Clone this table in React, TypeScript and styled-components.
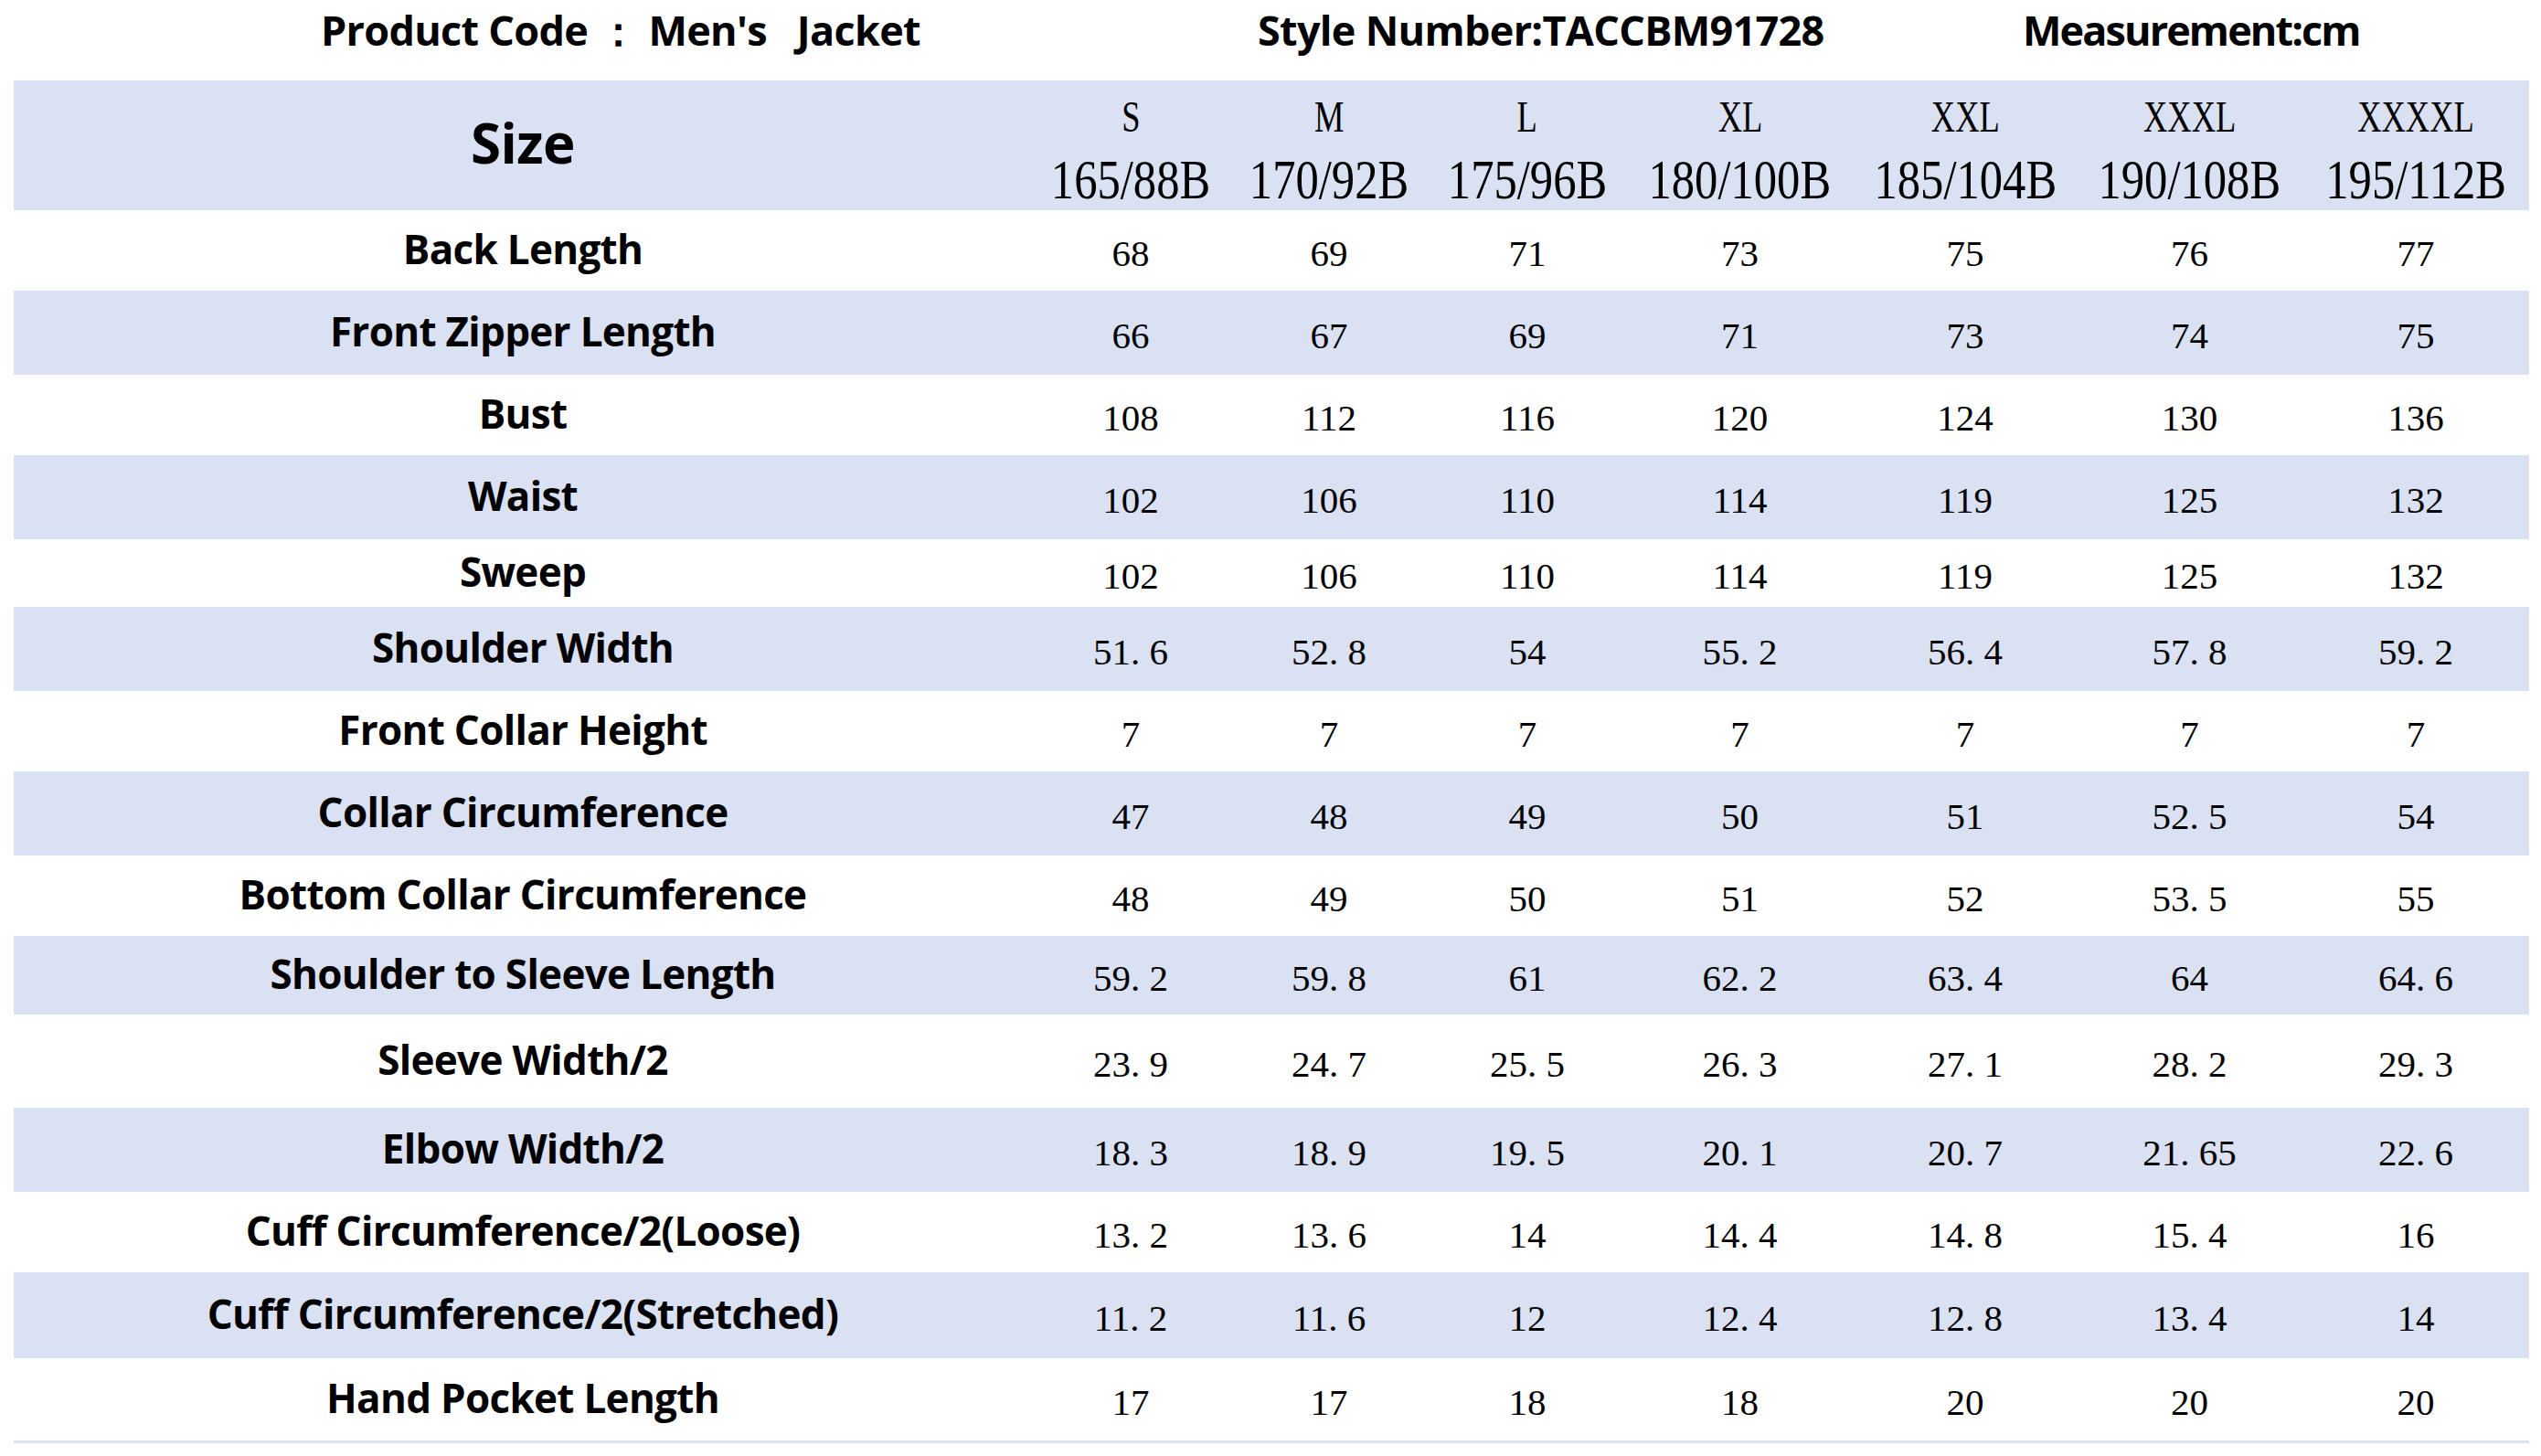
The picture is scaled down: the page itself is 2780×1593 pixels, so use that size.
import styled, { createGlobalStyle } from "styled-components";

const GlobalStyle = createGlobalStyle`
  html, body {
    margin: 0;
    padding: 0;
    background: #ffffff;
  }
  body {
    font-family: "Open Sans", "Noto Sans", sans-serif;
    color: #000000;
  }
`;

const COLUMNS = "1114px 216px 218px 216px 249px 244px 247px 248px";
const STRIPE = "#d9e1f2";

const Page = styled.div`
  width: 2780px;
  height: 1593px;
  background: #ffffff;
`;

const TitleBar = styled.div`
  display: grid;
  grid-template-columns: 1025px 837px auto;
  height: 88px;
  padding-left: 351px;
  padding-top: 2px;
  box-sizing: border-box;
`;

const TitleText = styled.div<{ $tight?: number }>`
  font-family: "Open Sans", "Noto Sans", sans-serif;
  font-weight: 700;
  font-size: 45px;
  line-height: normal;
  letter-spacing: ${({ $tight }) => $tight ?? -0.7}px;
  white-space: pre;
`;

const Table = styled.div`
  margin-left: 15px;
  width: 2752px;
  border-bottom: 3px solid ${STRIPE};
`;

const Row = styled.div<{ $h: number; $striped: boolean }>`
  display: grid;
  grid-template-columns: ${COLUMNS};
  height: ${({ $h }) => $h}px;
  background: ${({ $striped }) => ($striped ? STRIPE : "transparent")};
`;

const LabelCell = styled.div<{ $big?: boolean }>`
  display: flex;
  align-items: center;
  justify-content: center;
  font-family: "Open Sans", "Noto Sans", sans-serif;
  font-weight: 700;
  font-size: ${({ $big }) => ($big ? "60px" : "44px")};
  letter-spacing: ${({ $big }) => ($big ? "-0.5px" : "-0.7px")};
  padding-bottom: ${({ $big }) => ($big ? "6px" : "4px")};
  white-space: nowrap;
`;

const ValueCell = styled.div`
  display: flex;
  align-items: center;
  justify-content: center;
  font-family: "Liberation Serif", "Times New Roman", serif;
  font-size: 41px;
  padding-top: 6px;
  white-space: pre;
`;

const HeadCell = styled.div`
  display: flex;
  flex-direction: column;
  align-items: center;
  justify-content: flex-start;
  gap: 14px;
  padding-top: 15px;
  font-family: "Liberation Serif", "Times New Roman", serif;
  white-space: nowrap;
`;

const SizeName = styled.span`
  display: inline-block;
  font-size: 48px;
  line-height: 50px;
  transform: scaleX(0.76);
`;

const SizeSpec = styled.span`
  display: inline-block;
  font-size: 61px;
  line-height: 60px;
  transform: scaleX(0.83);
`;

const sizes = [
  { name: "S", spec: "165/88B" },
  { name: "M", spec: "170/92B" },
  { name: "L", spec: "175/96B" },
  { name: "XL", spec: "180/100B" },
  { name: "XXL", spec: "185/104B" },
  { name: "XXXL", spec: "190/108B" },
  { name: "XXXXL", spec: "195/112B" },
];

const rows: { label: string; h: number; values: string[] }[] = [
  { label: "Back Length", h: 88, values: ["68", "69", "71", "73", "75", "76", "77"] },
  { label: "Front Zipper Length", h: 92, values: ["66", "67", "69", "71", "73", "74", "75"] },
  { label: "Bust", h: 88, values: ["108", "112", "116", "120", "124", "130", "136"] },
  { label: "Waist", h: 92, values: ["102", "106", "110", "114", "119", "125", "132"] },
  { label: "Sweep", h: 74, values: ["102", "106", "110", "114", "119", "125", "132"] },
  { label: "Shoulder Width", h: 92, values: ["51. 6", "52. 8", "54", "55. 2", "56. 4", "57. 8", "59. 2"] },
  { label: "Front Collar Height", h: 88, values: ["7", "7", "7", "7", "7", "7", "7"] },
  { label: "Collar Circumference", h: 92, values: ["47", "48", "49", "50", "51", "52. 5", "54"] },
  { label: "Bottom Collar Circumference", h: 88, values: ["48", "49", "50", "51", "52", "53. 5", "55"] },
  { label: "Shoulder to Sleeve Length", h: 86, values: ["59. 2", "59. 8", "61", "62. 2", "63. 4", "64", "64. 6"] },
  { label: "Sleeve Width/2", h: 102, values: ["23. 9", "24. 7", "25. 5", "26. 3", "27. 1", "28. 2", "29. 3"] },
  { label: "Elbow Width/2", h: 92, values: ["18. 3", "18. 9", "19. 5", "20. 1", "20. 7", "21. 65", "22. 6"] },
  { label: "Cuff Circumference/2(Loose)", h: 88, values: ["13. 2", "13. 6", "14", "14. 4", "14. 8", "15. 4", "16"] },
  { label: "Cuff Circumference/2(Stretched)", h: 94, values: ["11. 2", "11. 6", "12", "12. 4", "12. 8", "13. 4", "14"] },
  { label: "Hand Pocket Length", h: 90, values: ["17", "17", "18", "18", "20", "20", "20"] },
];

export default function App() {
  return (
    <Page>
      <GlobalStyle />
      <TitleBar>
        <TitleText>{"Product Code \uFF1A Men's   Jacket"}</TitleText>
        <TitleText>Style Number:TACCBM91728</TitleText>
        <TitleText $tight={-1.9}>Measurement:cm</TitleText>
      </TitleBar>

      <Table>
        <Row $h={142} $striped>
          <LabelCell $big>Size</LabelCell>
          {sizes.map((s) => (
            <HeadCell key={s.name}>
              <SizeName>{s.name}</SizeName>
              <SizeSpec>{s.spec}</SizeSpec>
            </HeadCell>
          ))}
        </Row>

        {rows.map((r, i) => (
          <Row key={r.label} $h={r.h} $striped={i % 2 === 1}>
            <LabelCell>{r.label}</LabelCell>
            {r.values.map((v, j) => (
              <ValueCell key={j}>{v}</ValueCell>
            ))}
          </Row>
        ))}
      </Table>
    </Page>
  );
}
